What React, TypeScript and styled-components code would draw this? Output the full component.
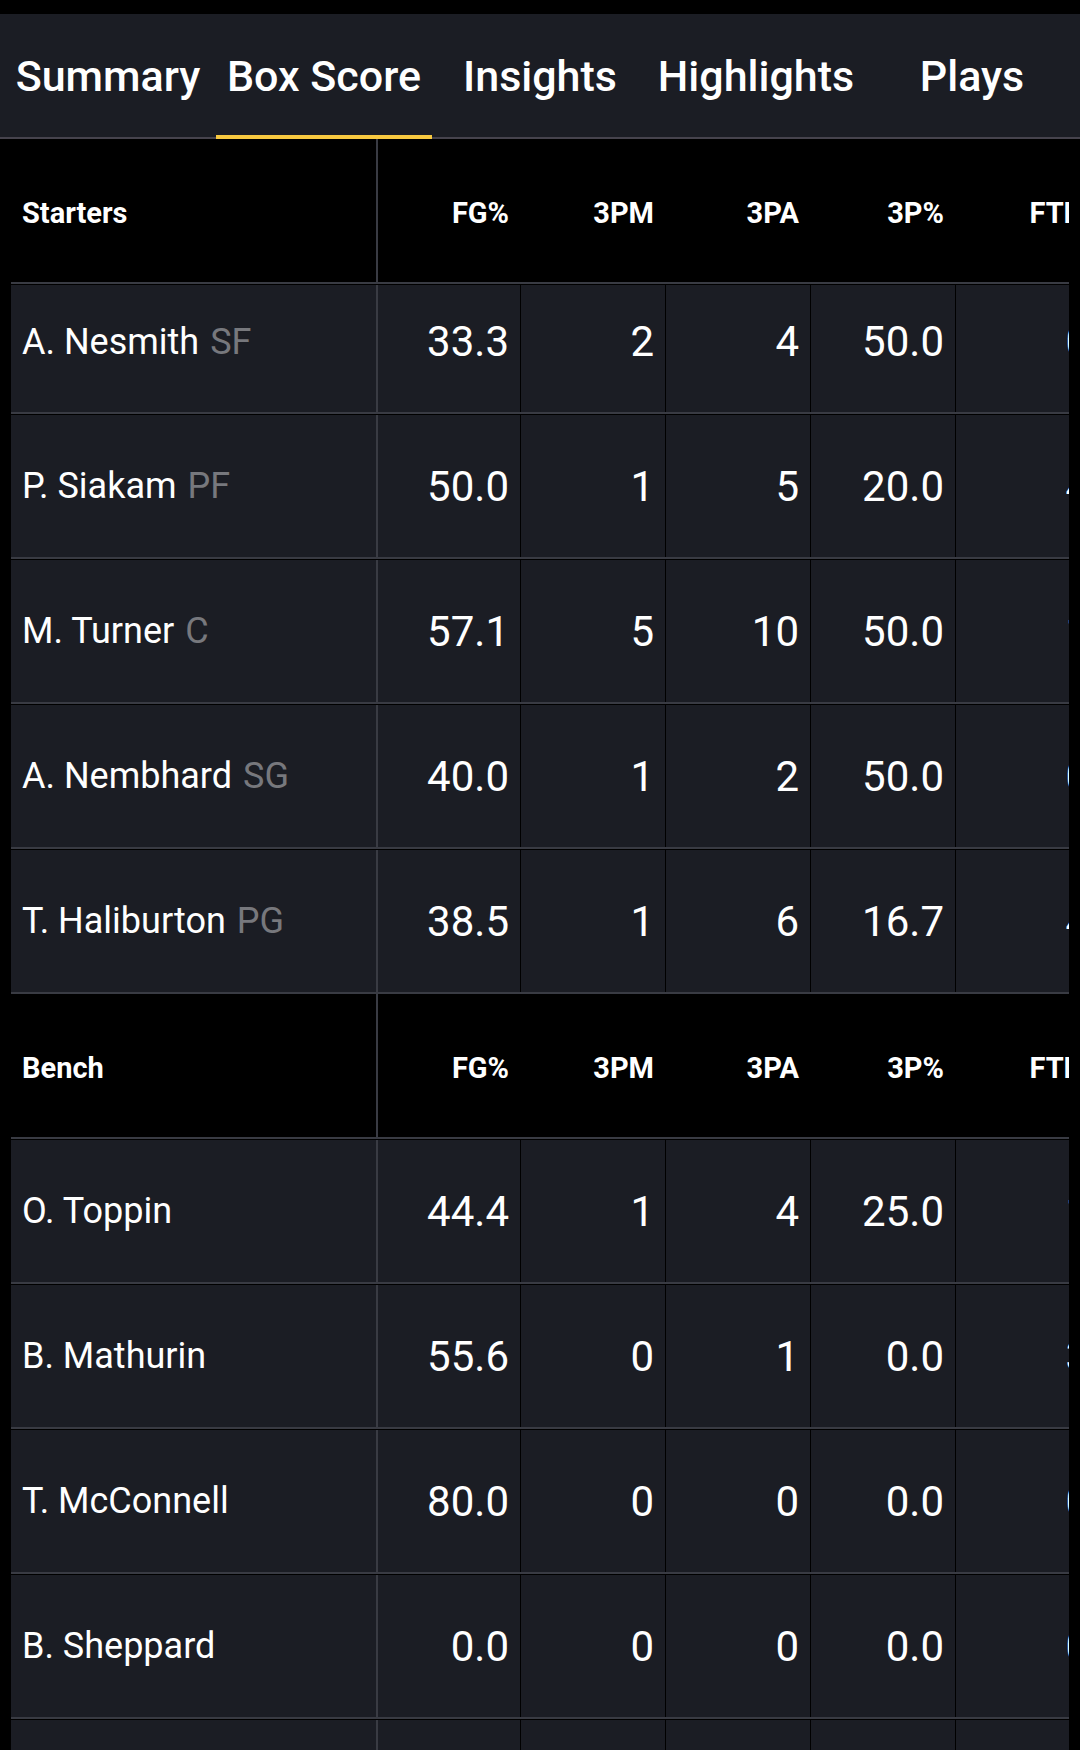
import styled, { createGlobalStyle } from "styled-components";

const GlobalStyle = createGlobalStyle`
  html, body {
    margin: 0;
    padding: 0;
    background: #000;
  }
  body {
    font-family: Roboto, "Noto Sans", "Liberation Sans", sans-serif;
    color: #fff;
    -webkit-font-smoothing: antialiased;
  }
`;

const PageStyled = styled.main`
  width: 1080px;
  padding-top: 14px;
  background: #000;
`;

const TabBarStyled = styled.nav`
  display: flex;
  background: #1b1d24;
`;

const TabStyled = styled.div<{ $active?: boolean }>`
  flex: 1 1 0;
  height: 125px;
  box-sizing: border-box;
  display: flex;
  align-items: center;
  justify-content: center;
  padding-top: ${(p) => (p.$active ? "2px" : "0")};
  border-bottom: ${(p) => (p.$active ? "4px solid #f8c940" : "2px solid #46434d")};
  font-size: 43px;
  font-weight: 500;
  white-space: nowrap;
`;

const TableStyled = styled.section`
  margin: 0 11px;
  overflow: hidden;
`;

const HeaderRowStyled = styled.div`
  display: flex;
  height: 145px;
  box-sizing: border-box;
  background: #000;
  border-bottom: 2px solid #393b43;
`;

const RowStyled = styled.div<{ $cut?: boolean }>`
  display: flex;
  height: ${(p) => (p.$cut ? "130px" : "145px")};
  box-sizing: border-box;
  background: #1b1d24;
  border-top: 1px solid #000;
  border-bottom: 2px solid #393b43;

  & > div {
    padding-bottom: ${(p) => (p.$cut ? "14px" : "0")};
  }
`;

const NameCellStyled = styled.div<{ $head?: boolean }>`
  flex: 0 0 367px;
  display: flex;
  align-items: center;
  padding-left: 11px;
  padding-top: ${(p) => (p.$head ? "5px" : "0")};
  box-sizing: border-box;
  border-right: 2px solid #393b43;
  font-size: ${(p) => (p.$head ? "29px" : "36px")};
  font-weight: ${(p) => (p.$head ? 700 : 400)};
  white-space: nowrap;
`;

const PositionStyled = styled.span`
  margin-left: 11px;
  color: #77787d;
`;

const StatCellStyled = styled.div<{ $head?: boolean; $w: number }>`
  flex: 0 0 ${(p) => p.$w}px;
  display: flex;
  align-items: center;
  justify-content: flex-end;
  padding-right: 11px;
  padding-top: ${(p) => (p.$head ? "5px" : "0")};
  box-sizing: border-box;
  border-right: 1px solid ${(p) => (p.$head ? "transparent" : "#000")};
  font-size: ${(p) => (p.$head ? "29px" : "42px")};
  font-weight: ${(p) => (p.$head ? 700 : 400)};
`;

interface IPlayer {
  name: string;
  pos?: string;
  stats: string[];
}

interface ISection {
  title: string;
  cutFirst?: boolean;
  players: IPlayer[];
}

const tabs = ["Summary", "Box Score", "Insights", "Highlights", "Plays"];
const columns = ["FG%", "3PM", "3PA", "3P%", "FTM"];
const widths = [143, 145, 145, 145, 145];

const sections: ISection[] = [
  {
    title: "Starters",
    cutFirst: true,
    players: [
      { name: "A. Nesmith", pos: "SF", stats: ["33.3", "2", "4", "50.0", "0"] },
      { name: "P. Siakam", pos: "PF", stats: ["50.0", "1", "5", "20.0", "4"] },
      { name: "M. Turner", pos: "C", stats: ["57.1", "5", "10", "50.0", "1"] },
      { name: "A. Nembhard", pos: "SG", stats: ["40.0", "1", "2", "50.0", "0"] },
      { name: "T. Haliburton", pos: "PG", stats: ["38.5", "1", "6", "16.7", "4"] },
    ],
  },
  {
    title: "Bench",
    players: [
      { name: "O. Toppin", stats: ["44.4", "1", "4", "25.0", "1"] },
      { name: "B. Mathurin", stats: ["55.6", "0", "1", "0.0", "3"] },
      { name: "T. McConnell", stats: ["80.0", "0", "0", "0.0", "0"] },
      { name: "B. Sheppard", stats: ["0.0", "0", "0", "0.0", "0"] },
      { name: "J. Walker", stats: ["50.0", "0", "1", "0.0", "0"] },
    ],
  },
];

export default function App(): React.ReactElement {
  return (
    <PageStyled>
      <GlobalStyle />
      <TabBarStyled>
        {tabs.map((tab) => (
          <TabStyled key={tab} $active={tab === "Box Score"}>
            {tab}
          </TabStyled>
        ))}
      </TabBarStyled>
      <TableStyled>
        {sections.map(({ title, cutFirst, players }) => (
          <div key={title}>
            <HeaderRowStyled>
              <NameCellStyled $head>{title}</NameCellStyled>
              {columns.map((col, i) => (
                <StatCellStyled $head $w={widths[i]} key={col}>
                  {col}
                </StatCellStyled>
              ))}
            </HeaderRowStyled>
            {players.map(({ name, pos, stats }, index) => (
              <RowStyled key={name} $cut={cutFirst && index === 0}>
                <NameCellStyled>
                  {name}
                  {pos && <PositionStyled>{pos}</PositionStyled>}
                </NameCellStyled>
                {stats.map((value, i) => (
                  <StatCellStyled $w={widths[i]} key={i}>
                    {value}
                  </StatCellStyled>
                ))}
              </RowStyled>
            ))}
          </div>
        ))}
      </TableStyled>
    </PageStyled>
  );
}
